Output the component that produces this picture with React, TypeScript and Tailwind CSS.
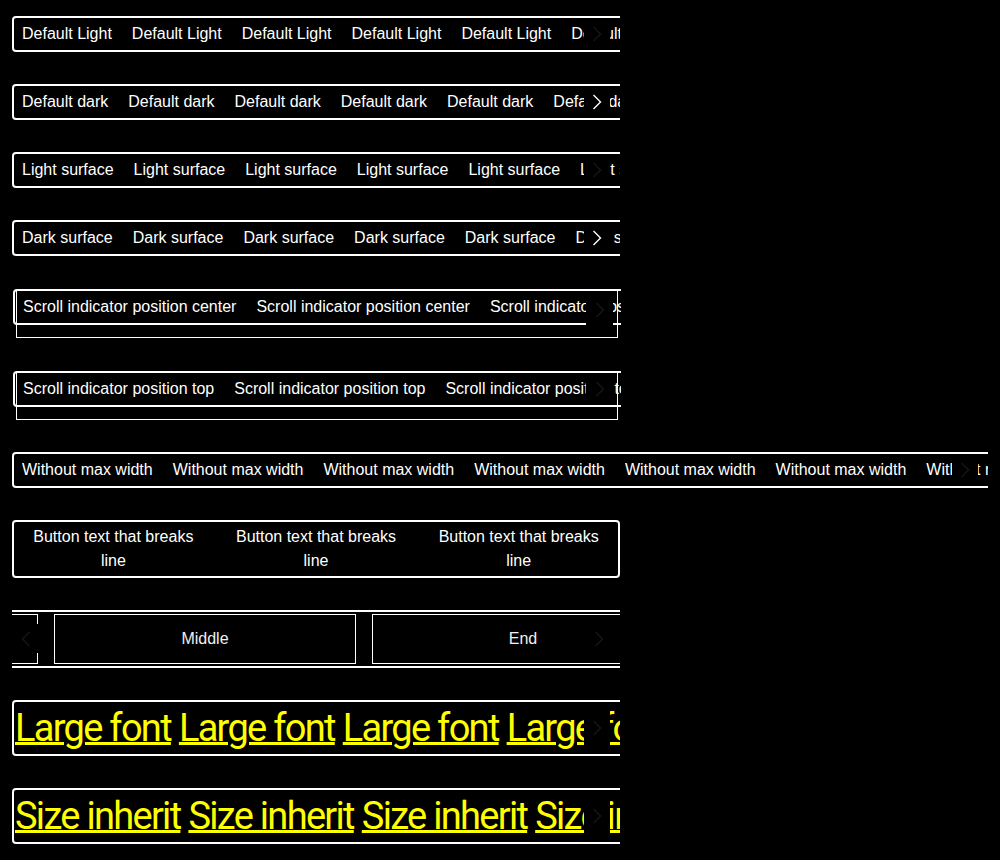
import React from "react";

type Tone = "faint" | "white";

const Chevron: React.FC<{ dir?: "left" | "right"; tone: Tone }> = ({ dir = "right", tone }) => (
  <svg
    width="10"
    height="16"
    viewBox="0 0 10 16"
    fill="none"
    stroke="currentColor"
    strokeWidth="1.4"
    className={tone === "white" ? "text-white" : "text-[#161616]"}
  >
    {dir === "right" ? <polyline points="1.5,1 8.5,8 1.5,15" /> : <polyline points="8.5,1 1.5,8 8.5,15" />}
  </svg>
);

const ScrollButton: React.FC<{ tone: Tone; className: string; dir?: "left" | "right" }> = ({ tone, className, dir }) => (
  <span className={"absolute bg-black flex items-center justify-center " + className}>
    <Chevron tone={tone} dir={dir} />
  </span>
);

const Tabs: React.FC<{ label: string; count: number }> = ({ label, count }) => (
  <div className="flex w-max gap-1 border-2 border-white rounded">
    {Array.from({ length: count }).map((_, i) => (
      <button key={i} className="shrink-0 px-2 py-1 text-base leading-6 whitespace-nowrap text-white">
        {label}
      </button>
    ))}
  </div>
);

const ScrollRow: React.FC<{ label: string; tone: Tone; wide?: boolean; count?: number }> = ({
  label,
  tone,
  wide,
  count = 8,
}) => (
  <div className={"relative overflow-hidden " + (wide ? "w-full" : "w-full max-w-[608px]")}>
    <Tabs label={label} count={count} />
    <ScrollButton tone={tone} className="right-[10px] top-[2px] bottom-[2px] w-[26px]" />
  </div>
);

const IndicatorRow: React.FC<{ label: string; position: "center" | "top" }> = ({ label, position }) => (
  <div className="mt-[2px] ml-1 w-[602px] h-[48px] border border-white relative">
    <div className="-ml-[4px] -mt-[2px] w-[608px] overflow-hidden">
      <Tabs label={label} count={5} />
    </div>
    <ScrollButton
      tone="faint"
      className={
        position === "center"
          ? "right-[4px] top-[3px] h-[32px] w-[27px]"
          : "right-[4px] top-0 h-[31px] w-[27px]"
      }
    />
  </div>
);

const BigRow: React.FC<{ label: string }> = ({ label }) => (
  <div className="relative w-full max-w-[608px] overflow-hidden">
    <div className="flex w-max gap-2 border-2 border-white rounded py-[2px] pl-px">
      {Array.from({ length: 6 }).map((_, i) => (
        <button
          key={i}
          className="shrink-0 text-[38px] leading-[48px] tracking-[-1.7px] whitespace-nowrap text-[#ffff00] underline decoration-[3px] underline-offset-[1px] font-['Roboto',sans-serif]"
        >
          {label}
        </button>
      ))}
    </div>
    <ScrollButton tone="faint" className="right-[10px] top-[2px] bottom-[2px] w-[26px]" />
  </div>
);

export default function App() {
  return (
    <div className="min-h-screen bg-black px-3 pt-4 flex flex-col gap-8 font-['Liberation_Sans',Arial,sans-serif]">
      <ScrollRow label="Default Light" tone="faint" />
      <ScrollRow label="Default dark" tone="white" />
      <ScrollRow label="Light surface" tone="faint" />
      <ScrollRow label="Dark surface" tone="white" />
      <IndicatorRow label="Scroll indicator position center" position="center" />
      <IndicatorRow label="Scroll indicator position top" position="top" />
      <ScrollRow label="Without max width" tone="faint" wide count={9} />

      <div className="flex w-[608px] gap-1 border-2 border-white rounded py-[3px]">
        {[0, 1, 2].map((i) => (
          <button key={i} className="flex-1 px-2 text-center text-base leading-6 text-white">
            Button text that breaks line
          </button>
        ))}
      </div>

      <div className="relative w-[608px] overflow-hidden border-y-2 border-white py-[2px]">
        <div className="flex w-max gap-4 -ml-[276px]">
          {["Start", "Middle", "End"].map((t) => (
            <div
              key={t}
              className="w-[302px] h-[50px] shrink-0 border border-white flex items-center justify-center text-base text-[#f0f0f0]"
            >
              {t}
            </div>
          ))}
        </div>
        <ScrollButton tone="faint" dir="left" className="left-0 top-[12px] h-[29px] w-[28px]" />
        <ScrollButton tone="faint" className="right-[8px] top-[12px] h-[29px] w-[26px]" />
      </div>

      <BigRow label="Large font" />
      <BigRow label="Size inherit" />
    </div>
  );
}
